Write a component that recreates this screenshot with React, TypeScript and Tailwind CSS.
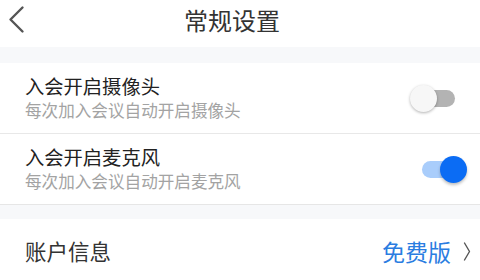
import React from "react";

const font = { fontFamily: '"Noto Sans CJK SC", "Noto Sans", sans-serif' };

function Toggle({ on }: { on: boolean }) {
  return (
    <div className="relative w-[57px] h-[27px] shrink-0">
      {on ? (
        <>
          <div className="absolute left-[12px] top-[5px] w-[40px] h-[17px] rounded-full bg-[#a9cdfb]" />
          <div className="absolute right-0 top-0 w-[27px] h-[27px] rounded-full bg-[#0b6cf4] shadow-[0_2px_3px_rgba(0,0,0,0.25)]" />
        </>
      ) : (
        <>
          <div className="absolute left-[5px] top-[5px] w-[40px] h-[17px] rounded-full bg-[#b3b3b3]" />
          <div className="absolute left-0 top-0 w-[27px] h-[27px] rounded-full bg-[#f7f7f7] shadow-[0_1px_3px_rgba(0,0,0,0.3)]" />
        </>
      )}
    </div>
  );
}

function Row({ title, sub, on }: { title: string; sub: string; on: boolean }) {
  return (
    <div className="flex items-center h-[70px] pl-[25px] pr-[13px] bg-white">
      <div className="flex-1 flex flex-col">
        <div className="text-[19.3px] leading-[22px] text-[#222]">{title}</div>
        <div className="mt-[2px] text-[16.6px] leading-[22px] text-[#a3a3a3]">{sub}</div>
      </div>
      <Toggle on={on} />
    </div>
  );
}

export default function App() {
  return (
    <div className="w-[480px] h-[280px] overflow-hidden bg-white" style={font}>
      <div className="relative h-[47px] flex justify-center pt-[6px] pr-[16px] bg-white">
        <svg className="absolute left-0 top-0" width="40" height="40" viewBox="0 0 40 40">
          <polyline points="22.5,7.5 10.5,19.5 22.5,31.5" fill="none" stroke="#555" strokeWidth="2.4" strokeLinecap="round" strokeLinejoin="round" />
        </svg>
        <div className="text-[24px] leading-[28px] text-[#333]">常规设置</div>
      </div>
      <div className="h-[16px] bg-[#f7f8fa]" />
      <Row title="入会开启摄像头" sub="每次加入会议自动开启摄像头" on={false} />
      <div className="h-px bg-[#e8e8e8]" />
      <Row title="入会开启麦克风" sub="每次加入会议自动开启麦克风" on={true} />
      <div className="h-px bg-[#e6e6e6]" />
      <div className="h-[14px] bg-[#f7f8fa]" />
      <div className="flex items-center h-[64px] pl-[25px] pr-[9px] bg-white">
        <div className="flex-1 text-[21.5px] leading-[26px] text-[#333]">账户信息</div>
        <div className="text-[23px] leading-[26px] text-[#2a7de1]">免费版</div>
        <svg className="ml-[12px]" width="8" height="20" viewBox="0 0 8 20">
          <polyline points="1.5,2 6.5,10.5 1.5,19" fill="none" stroke="#555" strokeWidth="1.4" strokeLinecap="round" strokeLinejoin="round" />
        </svg>
      </div>
    </div>
  );
}
